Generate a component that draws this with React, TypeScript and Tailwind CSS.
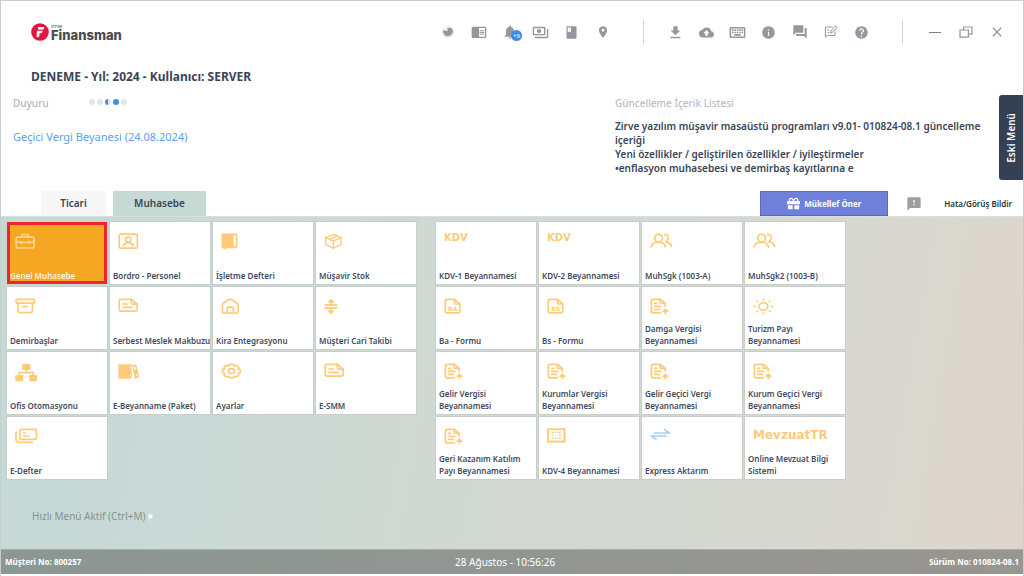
import type { ReactNode } from "react";
import {
  MdBackup,
  MdChromeReaderMode,
  MdClass,
  MdClose,
  MdFeedback,
  MdFileDownload,
  MdForum,
  MdHelp,
  MdInfo,
  MdNotifications,
  MdOutlineKeyboard,
  MdOutlinePayments,
  MdPlace,
} from "react-icons/md";
import { FaGift } from "react-icons/fa";

function Glyph({ children }: { children: ReactNode }) {
  return (
    <svg
      viewBox="0 0 24 18"
      className="h-[18px] w-6 overflow-visible"
      fill="none"
      stroke="currentColor"
      strokeWidth="1.7"
      strokeLinecap="round"
      strokeLinejoin="round"
      aria-hidden="true"
    >
      {children}
    </svg>
  );
}

const Briefcase = () => (
  <Glyph>
    <rect x="1.2" y="4" width="17.8" height="11" rx="1.5" />
    <path d="M6.8 4V2.6Q6.8 1.4 8.3 1.4H12Q13.4 1.4 13.4 2.6V4M1.2 7.4Q1.6 9.4 4 9.4H16.2Q18.6 9.4 19 7.4M6 8.4V10.6M14.2 8.4V10.6" />
  </Glyph>
);
const Portrait = () => (
  <Glyph>
    <rect x="1.2" y="1.2" width="18.2" height="14" rx="1.5" />
    <circle cx="10.3" cy="6.6" r="2.6" />
    <path d="M5.2 12.8Q6.6 9.6 10.3 9.6T15.4 12.8" />
  </Glyph>
);
const Ledger = () => (
  <Glyph>
    <path d="M1.4 1.4H11.8V14.4H5L3.6 15.6L2.6 14.4H1.4Z" fill="currentColor" />
    <path d="M11.8 1.4H14.2Q15.6 1.4 15.6 2.8V13Q15.6 14.4 14.2 14.4H11.8" />
  </Glyph>
);
const Parcel = () => (
  <Glyph>
    <path
      strokeWidth="1.4"
      d="M9.4 1.3L17 4.6V11.4L9.4 15.4L1.6 11.4V4.6ZM1.6 4.6L9.4 8.2L17 4.6M9.4 8.2V15.4M5.4 6.2L13.2 2.8"
    />
  </Glyph>
);
const Archive = () => (
  <Glyph>
    <rect x="1.2" y="1.4" width="18.2" height="3.8" rx="1" />
    <path d="M3 5.4V13Q3 14.6 4.8 14.6H15.6Q17.4 14.6 17.4 13V5.4M8 8.6H12.6" />
  </Glyph>
);
const Slip = () => (
  <Glyph>
    <path d="M3 1.4H13.4L19.2 6.2V11.6Q19.2 13.2 17.6 13.2H3Q1.2 13.2 1.2 11.6V3Q1.2 1.4 3 1.4Z" />
    <path d="M13.4 1.4V5Q13.4 6.2 14.8 6.2H19.2M5 6H9.4M5 9.4H14" />
  </Glyph>
);
const House = () => (
  <Glyph>
    <path d="M1.5 7Q1.5 5.8 2.6 5L8.2 1.6Q9.3 1 10.4 1.6L16 5Q17.2 5.8 17.2 7V13Q17.2 15 15.2 15H3.6Q1.5 15 1.5 13Z" />
    <path d="M6.2 15V11Q6.2 9.2 8 9.2H10.8Q12.5 9.2 12.5 11V15" />
  </Glyph>
);
const Split = () => (
  <Glyph>
    <path d="M1.4 6.9H12.6M1.4 10.1H12.6M7 6.9V2M7 10.1V15" />
    <path d="M4.2 4L7 1.2L9.8 4ZM4.2 13L7 15.8L9.8 13Z" fill="currentColor" strokeWidth="0.8" />
  </Glyph>
);
const Office = () => (
  <Glyph>
    <g fill="currentColor" stroke="none">
      <rect x="7.2" y="1" width="8.2" height="6" rx="1" />
      <rect x="0.2" y="12" width="8" height="6.2" rx="1" />
      <rect x="14.2" y="12" width="8" height="6.2" rx="1" />
    </g>
    <path d="M11.3 7V9.6M4.2 12V9.6H18.2V12" />
  </Glyph>
);
const Binders = () => (
  <Glyph>
    <g fill="currentColor" stroke="none">
      <path d="M1.2 1.3H13.8V15.8H1.2Q0.4 15.8 0.4 15V2.1Q0.4 1.3 1.2 1.3Z" />
      <path
        fillRule="evenodd"
        d="M14.2 2.3L17.6 1.4Q18.2 1.3 18.4 1.9L21.2 14Q21.3 14.6 20.7 14.8L17.4 15.7Q16.8 15.8 16.6 15.2ZM15.6 3.6L16.5 7L17.9 6.6L17.1 3.2ZM18 11.5L18.4 13.5L19.5 13.2L19 11.2Z"
      />
    </g>
    <path d="M12.4 3.5V5.6M12.4 11.9V13" stroke="white" strokeWidth="0.8" />
  </Glyph>
);

const gearPoint = (degrees: number, radius: number) => {
  const a = (degrees * Math.PI) / 180;
  return `${(10.4 + 9.2 * radius * Math.cos(a)).toFixed(2)} ${(8.1 + 7 * radius * Math.sin(a)).toFixed(2)}`;
};
const gearOutline =
  `M${gearPoint(-22.5, 0.8)}` +
  [0, 45, 90, 135, 180, 225, 270, 315]
    .map((d) => `C${gearPoint(d - 15, 1.1)} ${gearPoint(d + 15, 1.1)} ${gearPoint(d + 22.5, 0.8)}`)
    .join("") +
  "Z";
const Gear = () => (
  <Glyph>
    <path d={gearOutline} />
    <ellipse cx="10.4" cy="8.1" rx="3" ry="2.4" />
  </Glyph>
);
const Cards = () => (
  <Glyph>
    <rect x="4.8" y="1.4" width="16.6" height="10" rx="1.8" />
    <path d="M1 4V11.6Q1 14.4 3.8 14.4H17.4M8.4 5H10.4M8.4 8H14" />
  </Glyph>
);
const People = () => (
  <Glyph>
    <circle cx="8.6" cy="5.2" r="3.9" />
    <path d="M1.2 13.8Q2 9.4 8 9.2Q14.4 9.2 15.4 13.8M14.6 1.6Q18 1.2 18.2 4.8Q18.2 7.4 16 8.8Q20.8 9.6 21.6 13.4" />
  </Glyph>
);
const Declaration = () => (
  <Glyph>
    <path d="M10.4 14.9H3.2Q1.4 14.9 1.4 13V3Q1.4 1.4 3.2 1.4H10.4L15.2 5.4V8M10.2 1.4V4.2Q10.2 5.4 11.6 5.4H15.2M4.6 5.4H6.6M4.6 8.4H10.8M4.6 11.4H9.4M15.4 15.6V13" />
    <path d="M12.8 13.2L15.4 10.8L18 13.2Z" fill="currentColor" strokeWidth="1" />
  </Glyph>
);
const Form = ({ code }: { code: string }) => (
  <Glyph>
    <path d="M3.2 1.4H10.4L15.8 6V13Q15.8 14.9 14 14.9H3.2Q1.3 14.9 1.3 13V3Q1.3 1.4 3.2 1.4ZM10.4 1.4V4.6Q10.4 6 11.8 6H15.8" />
    <text
      x="8.7"
      y="13.4"
      textAnchor="middle"
      fontSize="6"
      fontWeight="700"
      fontFamily="DejaVu Sans, sans-serif"
      fill="currentColor"
      stroke="none"
    >
      {code}
    </text>
  </Glyph>
);
const Sun = () => (
  <Glyph>
    <ellipse cx="10.4" cy="8.4" rx="4.4" ry="3.7" />
    <path d="M10.4 1.3V1.7M10.4 15.1V15.5M1.4 8.4H2.2M18.6 8.4H19.4M3.9 3.2L4.4 3.6M16.9 3.2L16.4 3.6M3.9 13.6L4.4 13.2M16.9 13.6L16.4 13.2" />
  </Glyph>
);
const Safe = () => (
  <Glyph>
    <rect x="1.1" y="1.2" width="16.4" height="12.4" strokeWidth="2" strokeLinejoin="miter" />
    <path
      d="M5.2 4L6.2 4.8M13.4 4L12.4 4.8M5.2 10.8L6.2 10M13.4 10.8L12.4 10M8.2 4.2V4.6M10.6 4.2V4.6M8.2 10.2V10.6M10.6 10.2V10.6M5 7.4H5.8M12.8 7.4H13.6"
      strokeWidth="1.4"
    />
  </Glyph>
);
const Transfer = () => (
  <Glyph>
    <g className="text-[#a9d0fb]" stroke="currentColor">
      <path d="M4.6 5H19.4L14.6 1.6M16 8H1L6 11.2" />
    </g>
  </Glyph>
);
const Kdv = () => (
  <span className="block font-['DejaVu_Sans',sans-serif] text-[10px] leading-[10px] font-bold">KDV</span>
);
const Mevzuat = () => (
  <span className="block font-['DejaVu_Sans',sans-serif] text-[12px] leading-[14px] font-bold">MevzuatTR</span>
);

type TileData = { label: string; icon: ReactNode; active?: boolean };

const modules: TileData[] = [
  { label: "Genel Muhasebe", icon: <Briefcase />, active: true },
  { label: "Bordro - Personel", icon: <Portrait /> },
  { label: "İşletme Defteri", icon: <Ledger /> },
  { label: "Müşavir Stok", icon: <Parcel /> },
  { label: "Demirbaşlar", icon: <Archive /> },
  { label: "Serbest Meslek Makbuzu", icon: <Slip /> },
  { label: "Kira Entegrasyonu", icon: <House /> },
  { label: "Müşteri Cari Takibi", icon: <Split /> },
  { label: "Ofis Otomasyonu", icon: <Office /> },
  { label: "E-Beyanname (Paket)", icon: <Binders /> },
  { label: "Ayarlar", icon: <Gear /> },
  { label: "E-SMM", icon: <Slip /> },
  { label: "E-Defter", icon: <Cards /> },
];

const declarations: TileData[] = [
  { label: "KDV-1 Beyannamesi", icon: <Kdv /> },
  { label: "KDV-2 Beyannamesi", icon: <Kdv /> },
  { label: "MuhSgk (1003-A)", icon: <People /> },
  { label: "MuhSgk2 (1003-B)", icon: <People /> },
  { label: "Ba - Formu", icon: <Form code="BA" /> },
  { label: "Bs - Formu", icon: <Form code="BS" /> },
  { label: "Damga Vergisi\nBeyannamesi", icon: <Declaration /> },
  { label: "Turizm Payı\nBeyannamesi", icon: <Sun /> },
  { label: "Gelir Vergisi\nBeyannamesi", icon: <Declaration /> },
  { label: "Kurumlar Vergisi\nBeyannamesi", icon: <Declaration /> },
  { label: "Gelir Geçici Vergi\nBeyannamesi", icon: <Declaration /> },
  { label: "Kurum Geçici Vergi\nBeyannamesi", icon: <Declaration /> },
  { label: "Geri Kazanım Katılım\nPayı Beyannamesi", icon: <Declaration /> },
  { label: "KDV-4 Beyannamesi", icon: <Safe /> },
  { label: "Express Aktarım", icon: <Transfer /> },
  { label: "Online Mevzuat Bilgi\nSistemi", icon: <Mevzuat /> },
];

function Tile({ label, icon, active }: TileData) {
  return (
    <button
      type="button"
      className={
        active
          ? "flex h-[62px] flex-col items-start justify-between bg-[#f5a623] pt-[11px] pb-[2px] text-left text-[#fff3dc] outline-3 -outline-offset-3 outline-[#f4212f]"
          : "flex h-[62px] flex-col items-start justify-between bg-white pt-[11px] pb-[2px] text-left text-[#3f4a5c] outline-1 outline-[#c6cfcb]"
      }
    >
      <span className={active ? "pl-2 text-[#ffd48a]" : "pl-2 text-[#ffcb78]"}>{icon}</span>
      <span className="pl-[3px] text-[8px] leading-[12px] font-semibold whitespace-pre">{label}</span>
    </button>
  );
}

function TileGrid({ items, name }: { items: TileData[]; name: string }) {
  return (
    <section
      aria-label={name}
      className="grid auto-rows-min grid-cols-[repeat(4,100px)] gap-[3px]"
    >
      {items.map((t) => (
        <Tile key={t.label} {...t} />
      ))}
    </section>
  );
}

function BarButton({ name, children }: { name: string; children: ReactNode }) {
  return (
    <button
      type="button"
      aria-label={name}
      className="relative flex h-9 w-[31px] items-center justify-center text-[#9297a0]"
    >
      {children}
    </button>
  );
}

const Divider = () => <span className="mr-4 ml-[25px] h-6 w-px bg-[#d4d6d9]" />;

function Toolbar() {
  return (
    <div className="flex items-center justify-between pt-[13px] pr-[11px] pl-[30px]">
      <div className="flex items-center">
        <svg viewBox="0 0 18 18" className="mr-[2px] size-[18px]" aria-hidden="true">
          <circle cx="9" cy="9" r="8.8" fill="#e0173f" />
          <path
            d="M6.6 4.8Q7 4 8 4H13.4L12.4 6.4H9Q8.2 6.4 8 7.2ZM5.8 8.6Q6.2 7.8 7 7.8H11.8L10.8 10.2H8.4V13.6L5.6 14.4Z"
            fill="white"
          />
        </svg>
        <div className="pt-[2px] text-[#4a4a4c]">
          <div className="h-[4px] text-[5px] leading-[4px]">zirve</div>
          <div className="font-[Inter,sans-serif] text-[13px] leading-[15px] font-extrabold">Finansman</div>
        </div>
      </div>
      <nav className="flex items-center" aria-label="Araç çubuğu">
        <BarButton name="Durum">
          <svg viewBox="0 0 14 14" className="size-[14px]" aria-hidden="true">
            <circle cx="7" cy="7" r="5.4" fill="#f3f4f5" stroke="#e3e5e7" />
            <path d="M2.4 5Q4 6.4 7 5.4L6 3.4Q9 2 11 3.8Q12.6 6 11.4 8.8Q9.6 11.4 6.4 11.2Q2.6 10.4 2.2 7Z" fill="currentColor" />
          </svg>
        </BarButton>
        <BarButton name="Okuyucu">
          <MdChromeReaderMode className="size-4" />
        </BarButton>
        <BarButton name="Bildirimler">
          <MdNotifications className="size-4" />
          <span className="absolute top-[16px] left-[17px] flex size-[11px] items-center justify-center rounded-full bg-[#3f8ce4] text-[6px] leading-none text-white">
            +9
          </span>
        </BarButton>
        <BarButton name="Ödemeler">
          <MdOutlinePayments className="size-[17px]" />
        </BarButton>
        <BarButton name="Defter">
          <MdClass className="size-[15px]" />
        </BarButton>
        <BarButton name="Konum">
          <MdPlace className="size-[14px]" />
        </BarButton>
        <Divider />
        <BarButton name="İndir">
          <MdFileDownload className="size-[17px]" />
        </BarButton>
        <BarButton name="Yedekle">
          <MdBackup className="size-[15px]" />
        </BarButton>
        <BarButton name="Klavye">
          <MdOutlineKeyboard className="size-[19px]" />
        </BarButton>
        <BarButton name="Bilgi">
          <MdInfo className="size-[15px]" />
        </BarButton>
        <BarButton name="Mesajlar">
          <MdForum className="size-4" />
        </BarButton>
        <BarButton name="Not">
          <svg
            viewBox="0 0 14 14"
            className="size-[14px]"
            fill="none"
            stroke="currentColor"
            strokeWidth="1"
            strokeLinejoin="round"
            aria-hidden="true"
          >
            <path d="M8.6 2H1.4V12L3.6 10.4H11V6.6M3.4 5H5M3.4 7.6H5.2M6.4 8L6.8 6L11.6 1L13.2 2.4L8.4 7.4Z" />
          </svg>
        </BarButton>
        <BarButton name="Yardım">
          <MdHelp className="size-[15px]" />
        </BarButton>
        <Divider />
        <BarButton name="Küçült">
          <span className="h-px w-3 bg-[#7d828b]" />
        </BarButton>
        <BarButton name="Geri yükle">
          <svg viewBox="0 0 14 12" className="h-3 w-[14px]" fill="none" stroke="currentColor" strokeWidth="1.2" aria-hidden="true">
            <path d="M1 4H9.4V11.2H1ZM4.6 4V1H13V8.2H9.4" />
          </svg>
        </BarButton>
        <BarButton name="Kapat">
          <MdClose className="size-4" />
        </BarButton>
      </nav>
    </div>
  );
}

export default function App() {
  return (
    <div className="flex min-h-screen flex-col border-x border-t border-[#c5d0cc] bg-white pb-[2px] font-['Noto_Sans','Liberation_Sans',sans-serif] text-[#3a4556]">
      <header className="relative">
        <Toolbar />
        <h1 className="mt-[19px] pl-[30px] text-[12px] leading-4 font-bold">
          DENEME - Yıl: 2024 - Kullanıcı: SERVER
        </h1>
        <div className="flex h-[106px] justify-between pt-[10px] pr-[30px] pl-3">
          <section>
            <div className="flex items-center">
              <h2 className="w-[76px] text-[10px] leading-4 font-medium text-[#b4b6b9]">Duyuru</h2>
              <div className="mb-[2px] flex gap-[2px]" aria-hidden="true">
                <i className="size-[6px] rounded-full bg-[#e1e4e8]" />
                <i className="size-[6px] rounded-full bg-[#e1e4e8]" />
                <i className="size-[6px] rounded-full bg-linear-to-r from-[#3f8ce4] from-50% to-[#e1e4e8] to-50%" />
                <i className="size-[6px] rounded-full bg-[#3f8ce4]" />
                <i className="size-[6px] rounded-full bg-[#e1e4e8]" />
              </div>
            </div>
            <a href="#duyuru" className="mt-[18px] block text-[11px] leading-4 text-[#5a9fea]">
              Geçici Vergi Beyanesi (24.08.2024)
            </a>
          </section>
          <section className="w-[378px]">
            <h2 className="text-[10px] leading-4 font-medium text-[#bcbec1]">Güncelleme İçerik Listesi</h2>
            <p className="mt-2 text-[10px] leading-[14px] font-semibold">
              Zirve yazılım müşavir masaüstü programları v9.01- 010824-08.1 güncelleme
              <br />
              içeriği
              <br />
              Yeni özellikler / geliştirilen özellikler / iyileştirmeler
              <br />
              •enflasyon muhasebesi ve demirbaş kayıtlarına e
            </p>
          </section>
        </div>
        <button
          type="button"
          className="absolute top-[94px] right-0 flex h-[85px] w-6 items-center justify-center rounded-l-[3px] bg-[#344054] text-[10px] font-semibold text-white"
        >
          <span className="rotate-180 [writing-mode:vertical-rl]">Eski Menü</span>
        </button>
        <div className="flex items-stretch justify-between pl-10">
          <div className="flex h-[25px] gap-[7px]" role="tablist">
            <button type="button" role="tab" aria-selected="false" className="w-[65px] bg-[#f7f7f7] text-[10px] font-semibold">
              Ticari
            </button>
            <button type="button" role="tab" aria-selected="true" className="w-[93px] bg-[#c6d9d5] text-[10px] font-semibold">
              Muhasebe
            </button>
          </div>
          <div className="flex items-center pr-[11px]">
            <button
              type="button"
              className="flex h-[25px] w-32 items-center justify-center gap-1 border border-[#5b69b8] bg-[#6f80db] text-[8px] font-bold text-white"
            >
              <FaGift className="size-[13px]" />
              Mükellef Öner
            </button>
            <button type="button" className="ml-[18px] flex items-center text-[8px] font-semibold text-[#2b303a]">
              <MdFeedback className="mr-[22px] size-4 text-[#9b9ea3]" />
              Hata/Görüş Bildir
            </button>
          </div>
        </div>
      </header>
      <main className="flex flex-1 flex-col border-t border-[#d6dfdb] bg-[linear-gradient(100deg,#c4d9d5_0%,#cbd9d5_25%,#d2d8d3_50%,#d7d8d0_80%,#dbd7ce_92%,#ded4cc_100%)] pt-[5px] pl-[6px]">
        <div className="flex gap-5">
          <TileGrid items={modules} name="Muhasebe modülleri" />
          <TileGrid items={declarations} name="Beyannameler" />
        </div>
        <label className="mt-[29px] flex items-center gap-[2px] self-start pl-[25px] text-[10px] leading-4 text-[#87918f]">
          Hızlı Menü Aktif (Ctrl+M)
          <input type="checkbox" className="size-[5px] appearance-none border border-[#dfe5e2] bg-white" />
        </label>
      </main>
      <footer className="flex h-[25px] items-center justify-between border-t border-[#a5b0ab] bg-linear-to-r from-[#8a9793] to-[#999590] px-1 text-[8px] font-bold text-white">
        <span>Müşteri No: 800257</span>
        <span className="text-[10px] font-normal">28 Ağustos - 10:56:26</span>
        <span>Sürüm No: 010824-08.1</span>
      </footer>
    </div>
  );
}
